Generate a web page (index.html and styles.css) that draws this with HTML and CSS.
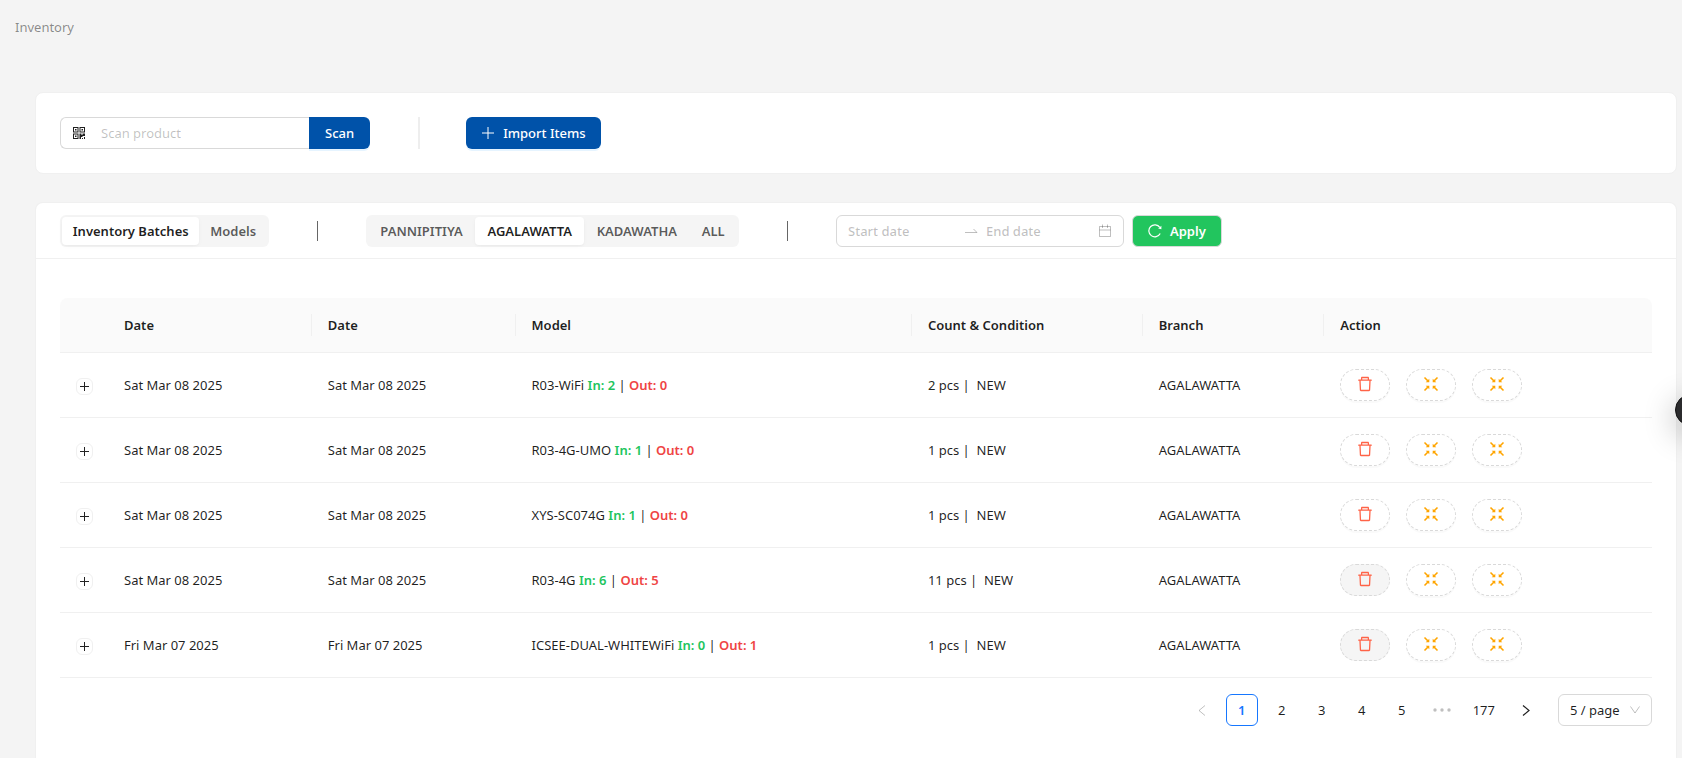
FILE: index.html
```html
<!DOCTYPE html>
<html lang="en">
<head>
    <meta charset="UTF-8">
    <meta name="viewport" content="width=device-width, initial-scale=1.0">
    <title>Inventory</title>
    <link rel="stylesheet" href="styles.css">
</head>
<body>
    <!-- shared icons -->
    <svg class="sprite" aria-hidden="true">
        <symbol id="icon-delete" viewBox="64 64 896 896">
            <path d="M360 184h-8c4.400 0 8-3.600 8-8v8h304v-8c0 4.400 3.600 8 8 8h-8v72h72v-80c0-35.300-28.700-64-64-64H352c-35.300 0-64 28.700-64 64v80h72v-72zm504 72H160c-17.700 0-32 14.300-32 32v32c0 4.400 3.600 8 8 8h60.400l24.700 523c1.600 34.100 29.800 61 63.900 61h454c34.200 0 62.300-26.800 63.900-61l24.700-523H888c4.400 0 8-3.600 8-8v-32c0-17.700-14.300-32-32-32zM731.300 840H292.700l-24.200-512h487l-24.200 512z"/>
        </symbol>
        <symbol id="icon-shrink" viewBox="0 0 16 16">
            <path d="M1.500 1.500l4 4M14.500 1.500l-4 4M1.500 14.500l4-4M14.500 14.500l-4-4" fill="none" stroke="currentColor" stroke-width="1.600"/>
            <path d="M6.300 6.300H2.700L6.300 2.700zM9.700 6.300V2.700l3.600 3.600zM6.300 9.700v3.600L2.700 9.700zM9.700 9.700h3.600l-3.600 3.600z"/>
        </symbol>
        <symbol id="icon-plus" viewBox="0 0 14 14">
            <path d="M7 1v12M1 7h12" fill="none" stroke="currentColor"/>
        </symbol>
    </svg>

    <nav class="breadcrumb">Inventory</nav>

    <main class="content">
        <section class="card scan-card">
            <form class="scan-group">
                <label class="scan-field">
                    <svg class="icon-qr" width="12" height="12" viewBox="0 0 12 12">
                        <path fill-rule="evenodd" d="M0 0h5.500v5.500H0zM1 1v3.500h3.500V1zM6.500 0H12v5.500H6.500zM7.500 1v3.500H11V1zM0 6.500h5.500V12H0zM1 7.500V11h3.500V7.500zM2 2h1.500v1.500H2zM8.500 2H10v1.500H8.500zM2 8.500h1.500V10H2zM6.500 6.500h2V8h1V6.500H12V9H9.500v1H8v2H6.500zM9 11h1v1H9zM11 10h1v2h-1z"/>
                    </svg>
                    <input type="text" placeholder="Scan product" aria-label="Scan product">
                </label>
                <button type="button" class="btn btn-primary btn-scan">Scan</button>
            </form>
            <div class="divider"></div>
            <button type="button" class="btn btn-primary">
                <svg width="14" height="14"><use href="#icon-plus"/></svg>
                Import Items
            </button>
        </section>

        <section class="card batch-card">
            <header class="toolbar">
                <div class="segmented views">
                    <button type="button" class="active">Inventory Batches</button>
                    <button type="button">Models</button>
                </div>
                <div class="bar"></div>
                <div class="segmented branches">
                    <button type="button">PANNIPITIYA</button>
                    <button type="button" class="active">AGALAWATTA</button>
                    <button type="button">KADAWATHA</button>
                    <button type="button">ALL</button>
                </div>
                <div class="bar"></div>
                <div class="date-range">
                    <input type="text" placeholder="Start date" aria-label="Start date">
                    <svg width="14" height="14" viewBox="0 0 14 14"><path d="M1 8.500h12L9.500 5" fill="none" stroke="currentColor"/></svg>
                    <input type="text" placeholder="End date" aria-label="End date">
                    <svg class="icon-calendar" width="14" height="14" viewBox="0 0 14 14"><path d="M1.500 2.500h11v10h-11zM1.500 6h11M4.500 .500v3.500M9.500 .500v3.500" fill="none" stroke="currentColor"/></svg>
                </div>
                <button type="button" class="btn btn-apply">
                    <svg width="14" height="14" viewBox="0 0 14 14"><path d="M12.200 9.500A6 6 0 1 1 11.800 3.400" fill="none" stroke="currentColor" stroke-width="1.200"/><path d="M13.400 1.800v3.400l-3.200-.600z"/></svg>
                    Apply
                </button>
            </header>

            <div class="card-body">
                <table>
                    <colgroup>
                        <col class="col-expand">
                        <col class="col-date">
                        <col class="col-date">
                        <col class="col-model">
                        <col class="col-count">
                        <col class="col-branch">
                        <col>
                    </colgroup>
                    <thead>
                        <tr>
                            <th></th>
                            <th>Date</th>
                            <th>Date</th>
                            <th>Model</th>
                            <th>Count &amp; Condition</th>
                            <th>Branch</th>
                            <th>Action</th>
                        </tr>
                    </thead>
                    <tbody>
                        <tr>
                            <td><button type="button" class="expand" aria-label="Expand row"></button></td>
                            <td>Sat Mar 08 2025</td>
                            <td>Sat Mar 08 2025</td>
                            <td>R03-WiFi <b class="in">In: 2</b> | <b class="out">Out: 0</b></td>
                            <td>2 pcs |&nbsp; NEW</td>
                            <td>AGALAWATTA</td>
                            <td>
                                <div class="actions">
                                    <button type="button" class="delete" aria-label="Delete"><svg width="16" height="16"><use href="#icon-delete"/></svg></button>
                                    <button type="button" aria-label="Merge"><svg width="16" height="16"><use href="#icon-shrink"/></svg></button>
                                    <button type="button" aria-label="Merge all"><svg width="16" height="16"><use href="#icon-shrink"/></svg></button>
                                </div>
                            </td>
                        </tr>
                        <tr>
                            <td><button type="button" class="expand" aria-label="Expand row"></button></td>
                            <td>Sat Mar 08 2025</td>
                            <td>Sat Mar 08 2025</td>
                            <td>R03-4G-UMO <b class="in">In: 1</b> | <b class="out">Out: 0</b></td>
                            <td>1 pcs |&nbsp; NEW</td>
                            <td>AGALAWATTA</td>
                            <td>
                                <div class="actions">
                                    <button type="button" class="delete" aria-label="Delete"><svg width="16" height="16"><use href="#icon-delete"/></svg></button>
                                    <button type="button" aria-label="Merge"><svg width="16" height="16"><use href="#icon-shrink"/></svg></button>
                                    <button type="button" aria-label="Merge all"><svg width="16" height="16"><use href="#icon-shrink"/></svg></button>
                                </div>
                            </td>
                        </tr>
                        <tr>
                            <td><button type="button" class="expand" aria-label="Expand row"></button></td>
                            <td>Sat Mar 08 2025</td>
                            <td>Sat Mar 08 2025</td>
                            <td>XYS-SC074G <b class="in">In: 1</b> | <b class="out">Out: 0</b></td>
                            <td>1 pcs |&nbsp; NEW</td>
                            <td>AGALAWATTA</td>
                            <td>
                                <div class="actions">
                                    <button type="button" class="delete" aria-label="Delete"><svg width="16" height="16"><use href="#icon-delete"/></svg></button>
                                    <button type="button" aria-label="Merge"><svg width="16" height="16"><use href="#icon-shrink"/></svg></button>
                                    <button type="button" aria-label="Merge all"><svg width="16" height="16"><use href="#icon-shrink"/></svg></button>
                                </div>
                            </td>
                        </tr>
                        <tr>
                            <td><button type="button" class="expand" aria-label="Expand row"></button></td>
                            <td>Sat Mar 08 2025</td>
                            <td>Sat Mar 08 2025</td>
                            <td>R03-4G <b class="in">In: 6</b> | <b class="out">Out: 5</b></td>
                            <td>11 pcs |&nbsp; NEW</td>
                            <td>AGALAWATTA</td>
                            <td>
                                <div class="actions">
                                    <button type="button" class="delete" disabled aria-label="Delete"><svg width="16" height="16"><use href="#icon-delete"/></svg></button>
                                    <button type="button" aria-label="Merge"><svg width="16" height="16"><use href="#icon-shrink"/></svg></button>
                                    <button type="button" aria-label="Merge all"><svg width="16" height="16"><use href="#icon-shrink"/></svg></button>
                                </div>
                            </td>
                        </tr>
                        <tr>
                            <td><button type="button" class="expand" aria-label="Expand row"></button></td>
                            <td>Fri Mar 07 2025</td>
                            <td>Fri Mar 07 2025</td>
                            <td>ICSEE-DUAL-WHITEWiFi <b class="in">In: 0</b> | <b class="out">Out: 1</b></td>
                            <td>1 pcs |&nbsp; NEW</td>
                            <td>AGALAWATTA</td>
                            <td>
                                <div class="actions">
                                    <button type="button" class="delete" disabled aria-label="Delete"><svg width="16" height="16"><use href="#icon-delete"/></svg></button>
                                    <button type="button" aria-label="Merge"><svg width="16" height="16"><use href="#icon-shrink"/></svg></button>
                                    <button type="button" aria-label="Merge all"><svg width="16" height="16"><use href="#icon-shrink"/></svg></button>
                                </div>
                            </td>
                        </tr>
                    </tbody>
                </table>

                <div class="pagination">
                    <button type="button" disabled aria-label="Previous page"><svg width="12" height="12" viewBox="0 0 12 12"><path d="M9 1.500L3 6.500l6 5" fill="none" stroke="currentColor"/></svg></button>
                    <button type="button" class="active">1</button>
                    <button type="button">2</button>
                    <button type="button">3</button>
                    <button type="button">4</button>
                    <button type="button">5</button>
                    <button type="button" class="jump" aria-label="Next 5 pages"><svg width="18" height="4" viewBox="0 0 18 4"><circle cx="2" cy="2" r="1.700"/><circle cx="9" cy="2" r="1.700"/><circle cx="16" cy="2" r="1.700"/></svg></button>
                    <button type="button">177</button>
                    <button type="button" aria-label="Next page"><svg width="12" height="12" viewBox="0 0 12 12"><path d="M3 1.500l6 5-6 5" fill="none" stroke="currentColor" stroke-width="1.200"/></svg></button>
                    <div class="page-size">
                        <select aria-label="Page size">
                            <option>5 / page</option>
                            <option>10 / page</option>
                            <option>20 / page</option>
                        </select>
                        <svg width="10" height="10" viewBox="0 0 10 10"><path d="M.500 1.500L5 8l4.500-6.500" fill="none" stroke="currentColor"/></svg>
                    </div>
                </div>
            </div>
        </section>
    </main>

    <button type="button" class="float-btn" aria-label="Open panel"></button>
</body>
</html>
```

FILE: styles.css
```css
* {
    box-sizing: border-box;
}

body {
    margin: 0;
    min-height: 100vh;
    display: flex;
    flex-direction: column;
    overflow-x: hidden;
    background-color: #f4f4f4;
    color: rgba(0, 0, 0, 0.88);
    font-family: "Segoe UI", "Noto Sans", sans-serif;
    font-size: 13px;
    line-height: 22px;
}

button,
input,
select {
    font: inherit;
    color: inherit;
}

button {
    cursor: pointer;
}

svg {
    display: block;
    flex: none;
    fill: currentColor;
}

.sprite {
    position: absolute;
    width: 0;
    height: 0;
}

.breadcrumb {
    padding: 16px 15px;
    color: rgba(0, 0, 0, 0.45);
}

.content {
    flex: 1;
    display: flex;
    flex-direction: column;
    gap: 28px;
    padding: 38px 5px 0 35px;
}

.card {
    background-color: #fff;
    border: 1px solid #f0f0f0;
    border-radius: 8px;
}

.scan-card {
    display: flex;
    padding: 24px;
}

.scan-group {
    display: flex;
}

.scan-field {
    display: flex;
    align-items: center;
    gap: 16px;
    width: 249px;
    height: 32px;
    padding-left: 12px;
    border: 1px solid #d9d9d9;
    border-right: none;
    border-radius: 6px 0 0 6px;
}

.scan-field input {
    width: 100%;
    min-width: 0;
    padding: 0;
    border: none;
    outline: none;
    background: none;
}

::placeholder {
    color: rgba(0, 0, 0, 0.25);
    opacity: 1;
}

.btn {
    display: flex;
    align-items: center;
    gap: 8px;
    height: 32px;
    padding: 0 15px;
    border: none;
    border-radius: 6px;
    color: #fff;
    font-weight: 500;
}

.btn-primary {
    background-color: #0052a9;
    box-shadow: 0 2px 0 rgba(5, 145, 255, 0.1);
}

.btn-scan {
    padding: 0 16px;
    border-radius: 0 6px 6px 0;
}

.btn-apply {
    margin-left: 8px;
    background-color: #22c55e;
    border: 1px solid #d9d9d9;
    font-weight: 600;
}

.divider {
    width: 2px;
    margin: 0 46px 0 48px;
    background-color: #eee;
}

.batch-card {
    flex: 1;
    border-bottom: none;
    border-radius: 8px 8px 0 0;
}

.toolbar {
    display: flex;
    align-items: center;
    height: 56px;
    padding: 0 24px;
    border-bottom: 1px solid #f0f0f0;
}

.segmented {
    display: flex;
    padding: 2px;
    border-radius: 6px;
    background-color: #f5f5f5;
}

.segmented button {
    flex: 1 1 auto;
    height: 28px;
    padding: 0 10px;
    border: none;
    border-radius: 4px;
    background: none;
    color: rgba(0, 0, 0, 0.65);
    font-weight: 600;
}

.segmented .active {
    background-color: #fff;
    color: rgba(0, 0, 0, 0.88);
    box-shadow: 0 1px 2px rgba(0, 0, 0, 0.03), 0 1px 6px -1px rgba(0, 0, 0, 0.04);
}

.views {
    min-width: 209px;
}

.branches {
    min-width: 373px;
}

.bar {
    width: 1px;
    height: 20px;
    margin: 0 48px;
    background-color: #666;
}

.date-range {
    display: flex;
    align-items: center;
    gap: 8px;
    width: 288px;
    height: 32px;
    padding: 0 11px;
    border: 1px solid #d9d9d9;
    border-radius: 6px;
    color: rgba(0, 0, 0, 0.25);
    font-weight: 500;
}

.date-range input {
    flex: 1;
    min-width: 0;
    padding: 0;
    border: none;
    outline: none;
    background: none;
}

.icon-calendar {
    margin-left: -4px;
}

.card-body {
    padding: 39px 24px 24px;
}

table {
    width: 100%;
    table-layout: fixed;
    border-collapse: separate;
    border-spacing: 0;
}

.col-expand {
    width: 48px;
}

.col-date {
    width: 12.8%;
}

.col-model {
    width: 24.9%;
}

.col-count {
    width: 14.5%;
}

.col-branch {
    width: 11.4%;
}

th,
td {
    padding: 16px;
    border-bottom: 1px solid #f0f0f0;
    text-align: left;
}

th {
    position: relative;
    background-color: #fafafa;
    font-weight: 600;
}

th:first-child {
    border-top-left-radius: 8px;
}

th:last-child {
    border-top-right-radius: 8px;
}

/* thin line between header cells */
th:not(:first-child):not(:last-child)::before {
    content: "";
    position: absolute;
    top: 16px;
    right: 0;
    width: 1px;
    height: 22px;
    background-color: #f0f0f0;
}

td b {
    font-weight: 600;
}

.in {
    color: #22c55e;
}

.out {
    color: #ef4444;
}

.expand {
    display: block;
    width: 17px;
    height: 17px;
    margin-top: 3px;
    padding: 0;
    border: 1px solid #f0f0f0;
    border-radius: 6px;
    background:
        linear-gradient(#222, #222) center / 9px 1px no-repeat,
        linear-gradient(#222, #222) center / 1px 9px no-repeat,
        #fff;
}

.actions {
    display: flex;
    gap: 16px;
}

.actions button {
    display: flex;
    align-items: center;
    justify-content: center;
    width: 50px;
    height: 32px;
    padding: 0 0 2px;
    border: 1px dashed #d9d9d9;
    border-radius: 16px;
    background-color: #fff;
    box-shadow: 0 2px 0 rgba(0, 0, 0, 0.02);
    color: orange;
}

.actions .delete {
    color: tomato;
}

.actions button:disabled {
    background-color: #f5f5f5;
    box-shadow: none;
    cursor: not-allowed;
}

.pagination {
    display: flex;
    justify-content: flex-end;
    gap: 8px;
    margin-top: 16px;
}

.pagination button {
    display: flex;
    align-items: center;
    justify-content: center;
    min-width: 32px;
    height: 32px;
    padding: 0 6px;
    border: 1px solid transparent;
    border-radius: 6px;
    background: none;
}

.pagination button:disabled,
.pagination .jump {
    color: rgba(0, 0, 0, 0.25);
}

.pagination .active {
    border-color: #1677ff;
    background-color: #fff;
    color: #1677ff;
    font-weight: 600;
}

.page-size {
    display: flex;
    align-items: center;
    margin-left: 8px;
    color: rgba(0, 0, 0, 0.25);
}

.page-size select {
    appearance: none;
    width: 94px;
    height: 32px;
    padding: 0 11px;
    border: 1px solid #d9d9d9;
    border-radius: 6px;
    background-color: #fff;
    color: rgba(0, 0, 0, 0.88);
}

.page-size svg {
    margin-left: -22px;
    margin-right: 12px;
    pointer-events: none;
}

/* round button tucked into the window edge */
.float-btn {
    position: fixed;
    top: 394px;
    right: -25px;
    width: 32px;
    height: 32px;
    border: 1px solid #111;
    border-radius: 50%;
    background-color: #2b2b2d;
    box-shadow: 0 8px 32px rgba(0, 0, 0, 0.3);
}
```
